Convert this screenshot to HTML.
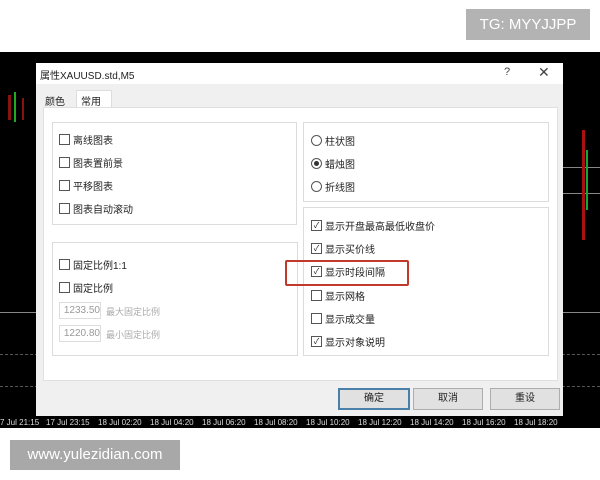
<html><head><style>
body{margin:0;width:600px;height:480px;background:#fff;position:relative;overflow:hidden;font-family:"Liberation Sans","Noto Sans CJK SC",sans-serif;font-size:10px;color:#222}
.a{position:absolute}
.grp{position:absolute;border:1px solid #dcdcdc;background:#fff}
.cb{position:absolute;display:flex;align-items:center;gap:3px;font-size:10px}
.box{width:9px;height:9px;border:1px solid #555;background:#fff;font-size:8px;line-height:9px;text-align:center}
.rd{width:9px;height:9px;border:1px solid #555;border-radius:50%;background:#fff;position:relative}
.btn{position:absolute;top:388px;height:20px;width:68px;background:#e1e1e1;border:1px solid #adadad;text-align:center;line-height:20px;font-size:10px}
.ax{position:absolute;top:418px;color:#ddd;font-size:8px}
</style></head><body>
<div class="a" style="left:466px;top:9px;width:124px;height:31px;background:#b3b3b3;color:#fff;font-size:15px;line-height:31px;text-align:center">TG: MYYJJPP</div>
<div class="a" style="left:0;top:52px;width:600px;height:376px;background:#000"></div>
<div class="a" style="left:0;top:354px;width:600px;border-top:1px dashed #555"></div>
<div class="a" style="left:0;top:386px;width:600px;border-top:1px dashed #555"></div>
<div class="a" style="left:0;top:312px;width:600px;border-top:1px solid #888"></div>
<div class="a" style="left:563px;top:167px;width:37px;border-top:1px solid #888"></div>
<div class="a" style="left:563px;top:193px;width:37px;border-top:1px solid #888"></div>
<div class="a" style="left:582px;top:130px;width:3px;height:110px;background:#a11"></div>
<div class="a" style="left:586px;top:150px;width:2px;height:60px;background:#1a3"></div>
<div class="a" style="left:8px;top:95px;width:3px;height:25px;background:#811"></div>
<div class="a" style="left:14px;top:92px;width:2px;height:30px;background:#2a2"></div>
<div class="a" style="left:22px;top:98px;width:2px;height:22px;background:#811"></div>
<div class="ax" style="left:0">7 Jul 21:15</div><div class="ax" style="left:46px">17 Jul 23:15</div><div class="ax" style="left:98px">18 Jul 02:20</div><div class="ax" style="left:150px">18 Jul 04:20</div><div class="ax" style="left:202px">18 Jul 06:20</div><div class="ax" style="left:254px">18 Jul 08:20</div><div class="ax" style="left:306px">18 Jul 10:20</div><div class="ax" style="left:358px">18 Jul 12:20</div><div class="ax" style="left:410px">18 Jul 14:20</div><div class="ax" style="left:462px">18 Jul 16:20</div><div class="ax" style="left:514px">18 Jul 18:20</div>
<div class="a" style="left:36px;top:63px;width:527px;height:353px;background:#f0f0f0"></div>
<div class="a" style="left:36px;top:63px;width:527px;height:21px;background:#fff"></div>
<div class="a" style="left:40px;top:67px;font-size:10px">属性XAUUSD.std,M5</div>
<div class="a" style="left:504px;top:66px;font-size:11px;color:#444">?</div>
<div class="a" style="left:538px;top:64px;font-size:14px;color:#444">✕</div>
<div class="a" style="left:45px;top:93px">颜色</div>
<div class="a" style="left:76px;top:90px;width:34px;height:18px;background:#fff;border:1px solid #ddd;border-bottom:none"></div>
<div class="a" style="left:81px;top:93px">常用</div>
<div class="a" style="left:43px;top:107px;width:513px;height:272px;background:#fff;border:1px solid #e0e0e0"></div>
<div class="grp" style="left:52px;top:122px;width:243px;height:101px"></div>
<div class="cb" style="left:59px;top:132px"><span class="box"></span>离线图表</div>
<div class="cb" style="left:59px;top:155px"><span class="box"></span>图表置前景</div>
<div class="cb" style="left:59px;top:178px"><span class="box"></span>平移图表</div>
<div class="cb" style="left:59px;top:201px"><span class="box"></span>图表自动滚动</div>
<div class="grp" style="left:52px;top:242px;width:244px;height:112px"></div>
<div class="cb" style="left:59px;top:257px"><span class="box"></span>固定比例1:1</div>
<div class="cb" style="left:59px;top:280px"><span class="box"></span>固定比例</div>
<div class="a" style="left:59px;top:302px;width:40px;height:15px;border:1px solid #ddd;color:#999;text-align:right;line-height:15px">1233.50</div>
<div class="a" style="left:106px;top:305px;color:#aaa;font-size:9px">最大固定比例</div>
<div class="a" style="left:59px;top:325px;width:40px;height:15px;border:1px solid #ddd;color:#999;text-align:right;line-height:15px">1220.80</div>
<div class="a" style="left:106px;top:328px;color:#aaa;font-size:9px">最小固定比例</div>
<div class="grp" style="left:303px;top:122px;width:244px;height:78px"></div>
<div class="cb" style="left:311px;top:133px"><span class="rd"></span>柱状图</div>
<div class="cb" style="left:311px;top:156px"><span class="rd"><span style="position:absolute;left:2px;top:2px;width:5px;height:5px;border-radius:50%;background:#333"></span></span>蜡烛图</div>
<div class="cb" style="left:311px;top:179px"><span class="rd"></span>折线图</div>
<div class="grp" style="left:303px;top:207px;width:244px;height:147px"></div>
<div class="cb" style="left:311px;top:218px"><span class="box">✓</span>显示开盘最高最低收盘价</div>
<div class="cb" style="left:311px;top:241px"><span class="box">✓</span>显示买价线</div>
<div class="cb" style="left:311px;top:264px"><span class="box">✓</span>显示时段间隔</div>
<div class="cb" style="left:311px;top:288px"><span class="box"></span>显示网格</div>
<div class="cb" style="left:311px;top:311px"><span class="box"></span>显示成交量</div>
<div class="cb" style="left:311px;top:334px"><span class="box">✓</span>显示对象说明</div>
<div class="a" style="left:285px;top:260px;width:120px;height:22px;border:2px solid #c0392b;border-radius:2px"></div>
<div class="btn" style="left:338px;border:2px solid #4a7fa8;height:18px;line-height:18px">确定</div>
<div class="btn" style="left:413px">取消</div>
<div class="btn" style="left:490px">重设</div>
<div class="a" style="left:10px;top:440px;width:170px;height:30px;background:#a8a8a8;color:#fff;font-size:15px;line-height:30px;text-align:center">www.yulezidian.com</div>
</body></html>
